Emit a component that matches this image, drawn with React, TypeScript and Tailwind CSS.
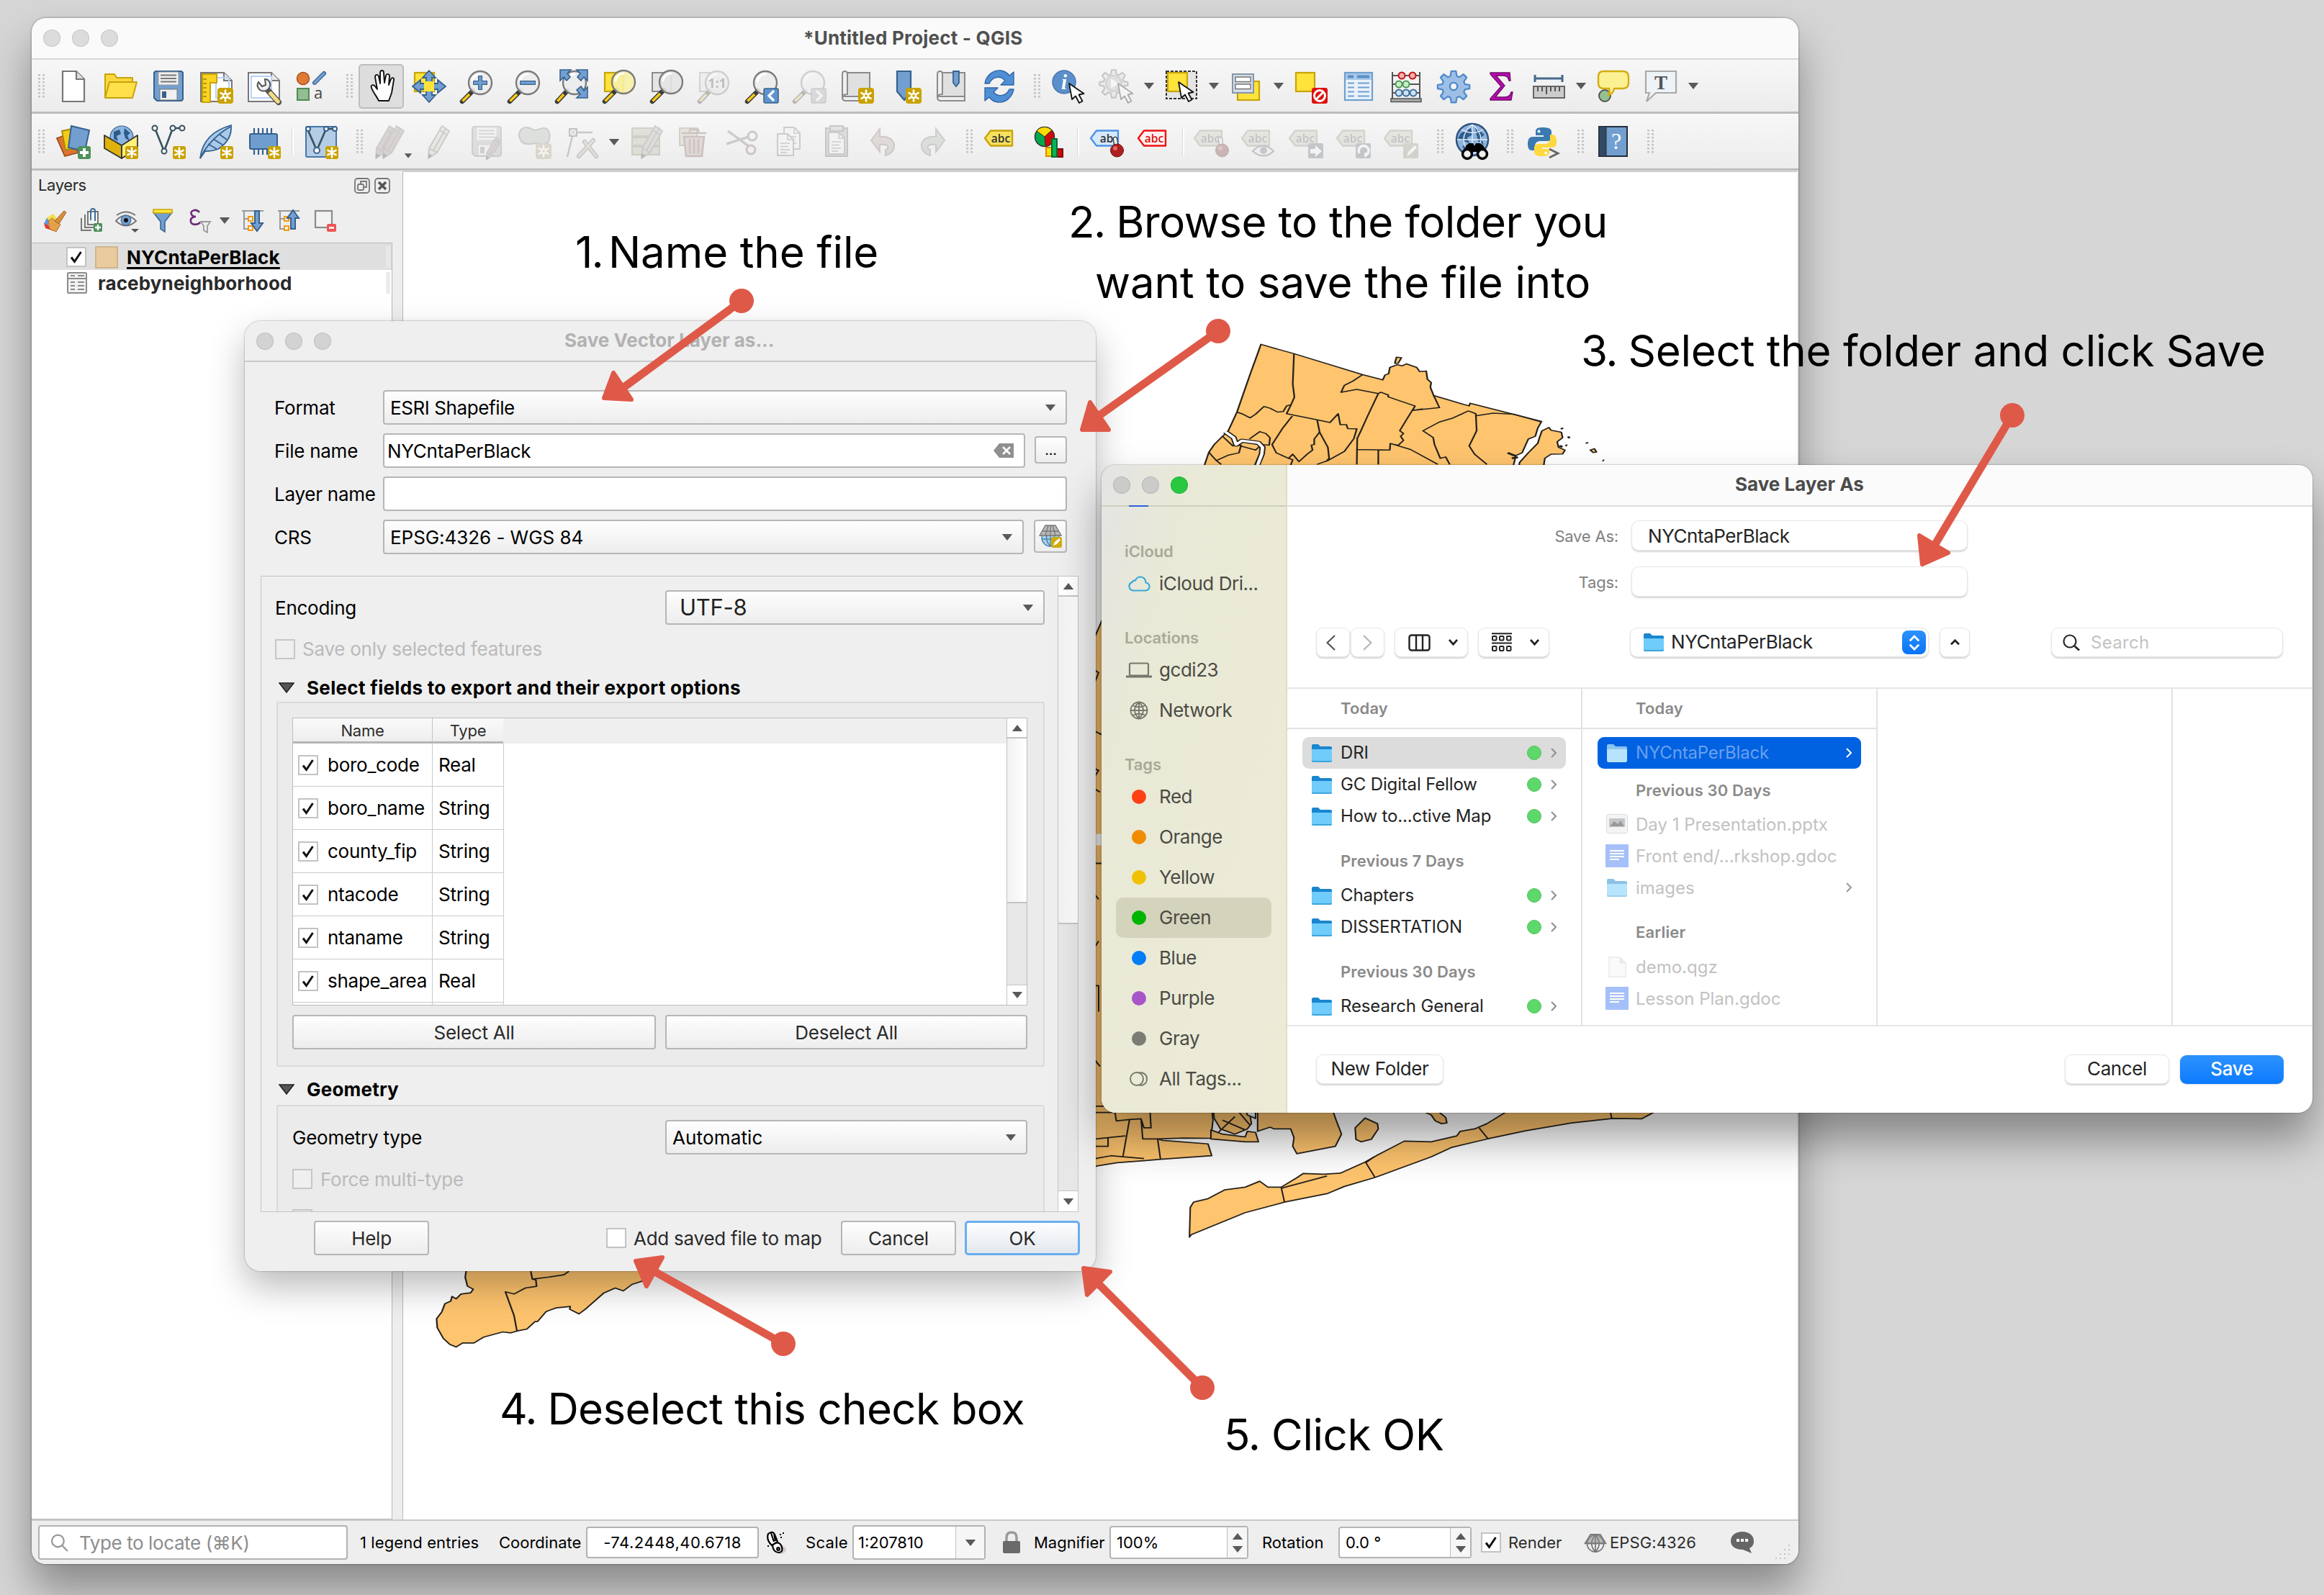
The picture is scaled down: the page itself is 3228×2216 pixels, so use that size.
import React from "react";

type Node = React.ReactNode;

const BLUE = "#729fcf";
const NAVY = "#35618e";
const YEL = "#fde33a";
const GOLD = "#c8a40a";

/* ---------- small drawing helpers, all on a 48 x 48 grid ---------- */

const Badge = () => (
  <g>
    <rect x="26" y="26" width="22" height="22" rx="4" fill="#c9a200" />
    <path d="M37 29.5v15M30.5 33.2l13 7.6M43.5 33.2l-13 7.6" stroke="#fff" strokeWidth="2.6" strokeLinecap="round" />
    <circle cx="37" cy="37" r="4" fill="#fff" />
    <circle cx="37" cy="37" r="1.8" fill="#c9a200" />
  </g>
);

const Star = () => (
  <g>
    <rect x="30" y="30" width="18" height="18" rx="3" fill="#c9a200" />
    <path d="M39 32.5v13M33.4 35.8l11.2 6.4M44.6 35.8l-11.2 6.4" stroke="#fff" strokeWidth="2.6" strokeLinecap="round" />
  </g>
);

const Lens = ({ cx = 29, cy = 19, fill = "#ececec" }: { cx?: number; cy?: number; fill?: string }) => (
  <g>
    <path d={`M${cx - 10} ${cy + 11}L4 45`} stroke="#3a3a3a" strokeWidth="6.5" strokeLinecap="round" />
    <path d={`M${cx - 15} ${cy + 16}L4.4 44.6`} stroke="#f6c916" strokeWidth="3.6" />
    <circle cx={cx} cy={cy} r="16" fill={fill} fillOpacity=".9" stroke="#7b7b7b" strokeWidth="2.4" />
    <path d={`M${cx - 11} ${cy - 2}a11 11 0 0 1 11-10`} stroke="#fff" strokeWidth="3" fill="none" strokeLinecap="round" />
  </g>
);

const Cursor = ({ x = 26, y = 20 }: { x?: number; y?: number }) => (
  <path
    transform={`translate(${x} ${y})`}
    d="M0 0L4 22l5-4.500 5 9.500 4.500-2.500-5-9 7-1.500z"
    fill="#fff"
    stroke="#111"
    strokeWidth="1.800"
    strokeLinejoin="round"
  />
);

/* eight-toothed cog outline centred on 24,24 */
const COG =
  "M20.500 1.500h7l1.200 7.200 3.800 1.600 6-4.300 4.800 4.800-4.200 6.100 1.500 3.700 7 1.200v5.400l-7 1.300-1.500 3.800 4.200 6-4.800 4.900-6-4.200-3.800 1.500-1.200 7.200h-7l-1.200-7.200-3.800-1.500-6 4.200-4.800-4.900 4.200-6-1.500-3.800-7-1.300v-5.400l7-1.200 1.500-3.700-4.200-6.100L9.500 6l6 4.300 3.800-1.600z";

const Disk = () => (
  <g>
    <path d="M6 3h36l2 2v37l-2 2H8l-4-4V5z" fill={BLUE} stroke={NAVY} strokeWidth="2" />
    <rect x="10" y="4" width="28" height="18" fill="#f0f0f0" stroke="#999" />
    <path d="M13 8.500h22M13 13h22M13 17.500h22" stroke="#777" strokeWidth="2" />
    <rect x="12" y="28" width="24" height="15" fill="#f0f0f0" stroke="#777" />
    <rect x="15" y="31" width="6" height="9" fill={NAVY} />
  </g>
);

const Pencil = ({ dx = 0, fill = "#d8cfae" }: { dx?: number; fill?: string }) => (
  <g transform={`translate(${dx} 0)`}>
    <path d="M24 2l10 7-17 30-12 8 1-14z" fill={fill} stroke="#777" strokeWidth="2" strokeLinejoin="round" />
    <path d="M29 6L12 36M6 33l11 6M21 8l10 7" stroke="#777" strokeWidth="1.800" />
    <path d="M5 47l.500-7 5 3z" fill="#333" />
  </g>
);

const TagShape = ({ fill, stroke, text, color, dx = 0 }: { fill: string; stroke: string; text: string; color: string; dx?: number }) => (
  <g transform={`translate(${dx} 0)`}>
    <path d="M3 19L11 8.500h30v21H11z" fill={fill} stroke={stroke} strokeWidth="2.400" strokeLinejoin="round" />
    <text x="25" y="24.500" textAnchor="middle" fontFamily="Open Sans" fontWeight="600" fontSize="15.500" fill={color}>
      {text}
    </text>
  </g>
);

const FadedTag = ({ children }: { children?: Node }) => (
  <g>
    <TagShape fill="#c9c7a6" stroke="#8d8b73" text="abc" color="#555" dx={-3} />
    {children}
  </g>
);

const Pin = () => (
  <g>
    <path d="M36 20l2 14" stroke="#333" strokeWidth="6.500" strokeLinecap="round" />
    <path d="M36 20l2 12" stroke="#f4f4f4" strokeWidth="4" strokeLinecap="round" />
    <circle cx="38.500" cy="36" r="9" fill="#ad1f1f" stroke="#6e1010" />
    <circle cx="36" cy="33" r="3" fill="#df6a6a" />
  </g>
);

const Scroll = () => (
  <g>
    <path d="M11 5h31v37H13" fill="#e0e0e0" stroke="#8b8b8b" strokeWidth="2" />
    <path d="M4 7q0-4 3.500-4T11 7v28q-7 0-7 4zM4 39q0 5 5 5h33v-6H9q-5-1-5 3" fill="#efefef" stroke="#8b8b8b" strokeWidth="2" />
  </g>
);

const Sheet = ({ x, y }: { x: number; y: number }) => (
  <g transform={`translate(${x} ${y})`}>
    <path d="M0 0h14l8 8v22H0z" fill="#f5f5f5" stroke="#777" strokeWidth="2" />
    <path d="M14 0v8h8M4 13h13M4 17.500h11M4 22h13M4 26h9" stroke="#777" strokeWidth="1.600" fill="none" />
  </g>
);

const icons: Record<string, Node> = {
  newDoc: (
    <g>
      <path d="M9 3h19l11 11v31H9z" fill="#fff" stroke="#777" strokeWidth="2.200" />
      <path d="M28 3v11h11" fill="#ddd" stroke="#777" strokeWidth="2.200" />
    </g>
  ),
  open: (
    <g stroke={GOLD} strokeWidth="2" strokeLinejoin="round">
      <path d="M2 40V7h13l3 5h22v9" fill="#fbd63c" />
      <path d="M2 40L8 18h38l-6 22z" fill="#ffe04a" />
    </g>
  ),
  save: <Disk />,
  newLayout: (
    <g>
      <path d="M3 5h32l11 11v29H3z" fill="#fff" stroke="#777" strokeWidth="2" />
      <path d="M35 5v11h11" fill="#e8e8e8" stroke="#777" strokeWidth="2" />
      <rect x="24" y="12" width="18" height="28" fill="none" stroke="#b9d2f5" strokeWidth="2" />
      <path d="M5 7h20v12h-9v27H5z" fill="#f9d423" stroke={GOLD} strokeWidth="2" />
      <path d="M6 14h5M6 20h5M6 26h5M6 32h5M6 38h5" stroke="#a48400" strokeWidth="1.600" />
      <Badge />
    </g>
  ),
  layoutMgr: (
    <g>
      <path d="M3 5h32l11 11v29H3z" fill="#fff" stroke="#777" strokeWidth="2" />
      <path d="M35 5v11h11" fill="#e8e8e8" stroke="#777" strokeWidth="2" />
      <rect x="7" y="10" width="28" height="30" fill="none" stroke="#b9d2f5" strokeWidth="2" />
      <path d="M28 27l7 8 10 11" stroke="#555" strokeWidth="8" strokeLinecap="round" />
      <path d="M34 34l10 11" stroke="#f3dc86" strokeWidth="5.500" strokeLinecap="round" />
      <path d="M17 18l5 6 5-2-1-8c6 0 9 6 6 12-4 6-10 5-13 3-4-4-4-8-2-11z" fill="#eee" stroke="#555" strokeWidth="2" />
    </g>
  ),
  style: (
    <g>
      <circle cx="13" cy="13" r="8.500" fill="#e07a35" stroke="#a8501a" strokeWidth="1.500" />
      <path d="M29 19L42 6" stroke={NAVY} strokeWidth="6" strokeLinecap="round" />
      <path d="M29 19L42 6" stroke={BLUE} strokeWidth="3.500" strokeLinecap="round" />
      <rect x="5" y="27" width="16" height="16" fill="#93bd93" stroke="#4f8a52" strokeWidth="2" />
      <text x="28" y="41" fontFamily="Open Sans" fontSize="22" fill="#444">a</text>
    </g>
  ),
  pan: (
    <path
      d="M20 44c-2-5-8-12-10-18-2-4 3-5 5-2l3 4-3-17c0-4 4-4 5-1l2 10V5c0-4 5-4 5 0l1 14 2-10c1-3 5-3 5 1l-1 12 3-8c1-3 5-2 4 1l-3 18-4 11z"
      fill="#fff"
      stroke="#111"
      strokeWidth="1.900"
      strokeLinejoin="round"
    />
  ),
  panSel: (
    <g>
      <rect x="4" y="5" width="27" height="26" fill={YEL} stroke={GOLD} strokeWidth="2.200" />
      <path
        d="M24 2l9 10h-5v8h8v-5l11 9-11 9v-5h-8v8h5l-9 10-9-10h5v-8h-8v5L1 24l11-9v5h8v-8h-5z"
        fill={BLUE}
        stroke={NAVY}
        strokeWidth="1.800"
      />
      <rect x="17" y="17" width="14" height="14" fill={YEL} />
    </g>
  ),
  zoomIn: (
    <g>
      <Lens />
      <path d="M29 9v20M19 19h20" stroke={NAVY} strokeWidth="6" />
      <path d="M29 10v18M20 19h18" stroke={BLUE} strokeWidth="3.500" />
    </g>
  ),
  zoomOut: (
    <g>
      <Lens />
      <path d="M18 19h22" stroke={NAVY} strokeWidth="6" />
      <path d="M19 19h20" stroke={BLUE} strokeWidth="3.500" />
    </g>
  ),
  zoomFull: (
    <g>
      <Lens cx={28} />
      <g fill={BLUE} stroke={NAVY} strokeWidth="1.600">
        <path d="M8 1h15l-5 5 4 5-5 5-4-5-5 5z" />
        <path d="M46 1H31l5 5-4 5 5 5 4-5 5 5z" />
        <path d="M46 40H31l5-5-5-6 6-5 4 6 5-5z" />
      </g>
    </g>
  ),
  zoomSel: (
    <g>
      <rect x="4" y="5" width="26" height="26" fill={YEL} stroke={GOLD} strokeWidth="2.200" />
      <Lens cx={30} cy={18} fill="#f7efa6" />
    </g>
  ),
  zoomLayer: (
    <g>
      <rect x="4" y="5" width="26" height="26" fill="#e4e4e4" stroke="#8b8b8b" strokeWidth="2" />
      <Lens cx={30} cy={18} fill="#e4e4e4" />
    </g>
  ),
  zoomNative: (
    <g>
      <rect x="4" y="5" width="26" height="26" fill="#e4e4e4" stroke="#8b8b8b" strokeWidth="2" />
      <Lens cx={28} cy={19} fill="#e4e4e4" />
      <text x="28" y="26" textAnchor="middle" fontFamily="Open Sans" fontWeight="700" fontSize="18" fill="#444">1:1</text>
    </g>
  ),
  zoomLast: (
    <g>
      <Lens />
      <rect x="27" y="27" width="20" height="20" rx="2" fill="#5f93cc" stroke={NAVY} strokeWidth="1.500" />
      <path d="M41 30l-7 7 7 7" stroke="#fff" strokeWidth="3.200" fill="none" />
    </g>
  ),
  zoomNext: (
    <g>
      <Lens />
      <rect x="27" y="27" width="20" height="20" rx="2" fill="#9aa7b5" stroke="#777" strokeWidth="1.500" />
      <path d="M34 30l7 7-7 7" stroke="#fff" strokeWidth="3.200" fill="none" />
    </g>
  ),
  newMap: (<g><Scroll /><Badge /></g>),
  newMark: (
    <g>
      <path d="M14 3h19v28l-9 12-10-12z" fill={BLUE} stroke={NAVY} strokeWidth="2.200" />
      <Badge />
    </g>
  ),
  marks: (
    <g>
      <Scroll />
      <path d="M26 3h8v16l-4 5-4-5z" fill={BLUE} stroke={NAVY} strokeWidth="1.800" />
    </g>
  ),
  refresh: (
    <g fill="#4f8fd6" stroke="#2f66a5" strokeWidth="1.400" strokeLinejoin="round">
      <path d="M4 20C6 8 16 1 26 2c5 .500 9 3 12 7l6-5v18H26l6-6c-7-8-18-5-22 4z" />
      <path d="M44 28C42 40 32 47 22 46c-5-.500-9-3-12-7l-6 5V26h18l-6 6c7 8 18 5 22-4z" />
    </g>
  ),
  identify: (
    <g>
      <circle cx="17" cy="18" r="16" fill="#5b8fcb" stroke="#4477b0" strokeWidth="1.500" />
      <text x="17" y="28" textAnchor="middle" fontFamily="Liberation Serif" fontWeight="700" fontStyle="italic" fontSize="29" fill="#fff">i</text>
      <Cursor x={24} y={20} />
    </g>
  ),
  action: (
    <g>
      <g transform="translate(0 0) scale(.83)"><path d={COG} fill="#ddd" stroke="#666" strokeWidth="2.600" strokeLinejoin="round" /></g>
      <circle cx="20" cy="20" r="11" fill="#aeb6c0" stroke="#888" strokeWidth="2" />
      <path d="M16 13l11 7-11 7z" fill="#fff" />
      <Cursor x={26} y={20} />
    </g>
  ),
  select: (
    <g>
      <rect x="3" y="3" width="42" height="38" fill="#e4e4e4" stroke="#333" strokeWidth="2" strokeDasharray="4 2" />
      <rect x="5" y="5" width="27" height="26" fill={YEL} stroke={GOLD} strokeWidth="2.200" />
      <Cursor x={20} y={18} />
    </g>
  ),
  selForm: (
    <g>
      <rect x="12" y="17" width="30" height="26" fill={YEL} stroke={GOLD} strokeWidth="2.200" />
      <rect x="5" y="7" width="29" height="26" fill="#d5dde6" stroke="#8496a8" strokeWidth="2" />
      <rect x="9" y="11" width="21" height="6.500" fill="#fff" stroke="#777" strokeWidth="1.500" />
      <rect x="9" y="21" width="21" height="6.500" fill="#fff" stroke="#777" strokeWidth="1.500" />
    </g>
  ),
  deselect: (
    <g>
      <rect x="3" y="5" width="26" height="26" fill={YEL} stroke={GOLD} strokeWidth="2.200" />
      <rect x="25" y="26" width="22" height="22" rx="3" fill="#dd1111" />
      <circle cx="36" cy="37" r="7.500" fill="none" stroke="#fff" strokeWidth="3" />
      <path d="M31 42l10-10" stroke="#fff" strokeWidth="3" />
    </g>
  ),
  table: (
    <g>
      <rect x="5" y="5" width="38" height="38" fill="#eaf1f9" stroke="#6f9fd0" strokeWidth="2.200" />
      <rect x="6" y="6" width="36" height="9" fill="#a9c8e8" />
      <path d="M9 10.500h8M22 10.500h17" stroke="#5b8fc7" strokeWidth="4" />
      <path d="M9 19.500h9M23 19.500h16M9 25.500h9M23 25.500h16M9 31.500h9M23 31.500h16M9 37.500h9M23 37.500h16" stroke="#6f9fd0" strokeWidth="2.200" />
    </g>
  ),
  abacus: (
    <g>
      <path d="M5 4v38M43 4v38M5 9h38M5 21h38M5 33h38" stroke="#555" strokeWidth="2" />
      <g strokeWidth="2">
        <circle cx="18" cy="9" r="4.500" fill="#f7b0b0" stroke="#c01515" />
        <circle cx="33" cy="9" r="4.500" fill="#f7b0b0" stroke="#c01515" />
        <circle cx="14" cy="21" r="4.500" fill="#c9efc9" stroke="#4f9a55" />
        <circle cx="24" cy="21" r="4.500" fill="#c9efc9" stroke="#4f9a55" />
        <circle cx="14" cy="33" r="4.500" fill="#cfe2f5" stroke="#3d6f9e" />
        <circle cx="24" cy="33" r="4.500" fill="#cfe2f5" stroke="#3d6f9e" />
        <circle cx="34" cy="33" r="4.500" fill="#cfe2f5" stroke="#3d6f9e" />
      </g>
      <rect x="3" y="41" width="42" height="4.500" fill="#aaa" stroke="#555" strokeWidth="1.500" />
    </g>
  ),
  gear: (
    <g transform="translate(1.500 1.500) scale(.94)">
      <path d={COG} fill="#9dbfe6" stroke="#4f8acb" strokeWidth="2.400" strokeLinejoin="round" />
      <circle cx="24" cy="24" r="5.500" fill="#f3f3f3" stroke="#4f8acb" strokeWidth="2.600" />
    </g>
  ),
  sigma: <path d="M9 5h27l1 11h-2c-1-5-3-7-8-7H17l12 14-13 16h13c6 0 8-3 9-7h2l-2 11H9v-2l15-17L9 7z" fill="#bb0ab0" stroke="#6d0a6a" strokeWidth="1.300" />,
  ruler: (
    <g>
      <path d="M5 13h38M5 8v10M43 8v10" stroke="#44688c" strokeWidth="3" />
      <rect x="3" y="24" width="43" height="16" fill="#ccc" stroke="#666" strokeWidth="2" />
      <path d="M9 25v6M15 25v6M21 25v10M27 25v6M33 25v6M39 25v6" stroke="#555" strokeWidth="2" />
    </g>
  ),
  tips: (
    <g>
      <circle cx="12" cy="37" r="8" fill="#93c193" stroke="#555" strokeWidth="2" />
      <path d="M10 3h27q8 0 8 8v8q0 8-8 8H25q-1 7-9 10 4-4 2-10h-8q-7 0-7-8v-8q0-8 7-8z" fill="#fcf192" stroke="#d1ad10" strokeWidth="2.400" />
    </g>
  ),
  annot: (
    <g>
      <path d="M3 3h42v30H17L4 45l4-12H3z" fill="#eef3f8" stroke="#a9a9a9" strokeWidth="2.200" />
      <text x="24" y="28" textAnchor="middle" fontFamily="Liberation Serif" fontWeight="700" fontSize="27" fill="#555">T</text>
    </g>
  ),
  dsm: (
    <g>
      <path d="M1 19l14-5 16 25-19 5z" fill="#dd7431" stroke="#9c4d18" strokeWidth="1.800" />
      <path d="M8 9l18-4 6 29-19 1z" fill="#f4cc15" stroke="#a8880a" strokeWidth="1.800" />
      <path d="M21 2l25 6-6 29-23-5z" fill={BLUE} stroke={NAVY} strokeWidth="2" />
      <rect x="30" y="30" width="18" height="18" rx="3" fill="#4f915a" />
      <path d="M39 33v12M33 39h12" stroke="#fff" strokeWidth="4" />
    </g>
  ),
  geopkg: (
    <g>
      <circle cx="25" cy="18" r="16" fill="#8db6e2" stroke="#35618e" strokeWidth="1.200" />
      <path d="M14 10l8-3 2 6-6 3 2 7-6-3zM29 5l8 7-4 3 3 8-6-4-2-7z" fill="#2e5a88" />
      <path d="M1 15l24 14v18L1 33z" fill="#dfb20c" stroke="#333" strokeWidth="1.800" strokeLinejoin="round" />
      <path d="M47 15L25 29v18l22-14z" fill="#fff07a" stroke="#333" strokeWidth="1.800" strokeLinejoin="round" />
      <Star />
    </g>
  ),
  shp: (
    <g>
      <path d="M5 5l13 32L30 5h14" fill="none" stroke="#35505e" strokeWidth="2.600" />
      <g fill="#fff" stroke="#35505e" strokeWidth="2">
        <circle cx="5" cy="5" r="3.500" />
        <circle cx="30" cy="5" r="3.500" />
        <circle cx="43" cy="5" r="3.500" />
        <circle cx="18" cy="37" r="3.500" />
      </g>
      <Star />
    </g>
  ),
  feather: (
    <g>
      <path d="M2 47C4 30 12 10 45 1c1 12-4 24-18 33-7 3-14 3-18 3z" fill="#a9c9ea" stroke="#35618e" strokeWidth="1.800" />
      <path d="M2 47C8 34 22 15 44 3M13 27l12 7M20 20l13 8M28 13l11 8" stroke="#35618e" strokeWidth="1.800" fill="none" />
      <Star />
    </g>
  ),
  memory: (
    <g>
      <path d="M11 5v37M17 5v37M23 5v37M29 5v37M35 5v37" stroke="#35618e" strokeWidth="2.200" />
      <rect x="5" y="13" width="38" height="21" rx="2" fill="#6f9dd0" stroke="#35618e" strokeWidth="2" />
      <Star />
    </g>
  ),
  virtual: (
    <g>
      <rect x="3" y="3" width="42" height="42" rx="2" fill="#b5cce6" stroke="#4577a8" strokeWidth="2" />
      <path d="M5 6l13 30L31 6h12" fill="none" stroke="#35505e" strokeWidth="2.600" />
      <g fill="#fff" stroke="#35618e" strokeWidth="2">
        <circle cx="6" cy="6" r="3" />
        <circle cx="31" cy="6" r="3" />
        <circle cx="43" cy="6" r="3" />
        <circle cx="18" cy="36" r="4" />
      </g>
      <Star />
    </g>
  ),
  edits: (
    <g>
      <Pencil dx={-3} fill="#b98a80" />
      <Pencil dx={7} fill="#b98a80" />
    </g>
  ),
  pencil: <Pencil dx={4} />,
  saveEdits: (<g><g opacity=".75" className="saturate-0"><Disk /></g><g transform="translate(20 16) scale(.7)"><Pencil fill="#b98a80" /></g></g>),
  addPoly: (
    <g>
      <path d="M4 10c4-9 14-6 18-3 6 3 10-3 16-2 8 1 9 12 6 18-4 7-12 3-18 3-8 1-15 3-20-3-3-4-4-9-2-13z" fill="#a9b8a0" stroke="#777" strokeWidth="2" />
      <g className="saturate-50"><Badge /></g>
    </g>
  ),
  vertex: (
    <g>
      <path d="M4 45L12 12M14 11h25" stroke="#666" strokeWidth="2.400" />
      <rect x="7" y="6" width="10" height="10" fill="#eee" stroke="#555" strokeWidth="2" />
      <path d="M7 6l10 10M17 6L7 16" stroke="#555" />
      <path d="M20 44l20-22M28 24l16 20" stroke="#555" strokeWidth="6" strokeLinecap="round" />
      <path d="M20 44l20-22M28 24l16 20" stroke="#c9b98a" strokeWidth="3.500" strokeLinecap="round" />
    </g>
  ),
  multiEdit: (
    <g>
      <g fill="#b9b884" stroke="#85844f" strokeWidth="2">
        <rect x="4" y="5" width="38" height="11" />
        <rect x="4" y="18" width="38" height="11" />
        <rect x="4" y="31" width="38" height="11" />
      </g>
      <Pencil dx={12} fill="#c9a79c" />
    </g>
  ),
  trash: (
    <g>
      <rect x="4" y="5" width="24" height="24" fill="#c9c78f" stroke="#85844f" strokeWidth="2" />
      <path d="M10 17h28l-3 27H13z" fill="#d89a9a" stroke="#9c4f4f" strokeWidth="2.500" />
      <path d="M7 12h34M18 12V7h12v5M18 20v20M24 20v20M30 20v20" stroke="#9c4f4f" strokeWidth="2.500" fill="none" />
    </g>
  ),
  cut: (
    <g>
      <path d="M5 9l29 21M3 27l31-10" stroke="#777" strokeWidth="3.500" />
      <circle cx="39" cy="16" r="6" fill="none" stroke="#9c6060" strokeWidth="3" />
      <circle cx="37" cy="35" r="6" fill="none" stroke="#9c6060" strokeWidth="3" />
    </g>
  ),
  copy: (<g><Sheet x={17} y={4} /><Sheet x={8} y={13} /></g>),
  paste: (
    <g>
      <rect x="9" y="5" width="30" height="39" fill="#aaa" stroke="#666" strokeWidth="2" />
      <Sheet x={13} y={11} />
      <rect x="15" y="2" width="18" height="7" fill="#bbb" stroke="#666" strokeWidth="2" />
    </g>
  ),
  undo: <path d="M18 6v11c14-2 21 7 20 14-1 6-6 11-12 12V35c5-1 6-9-8-7v10L6 22z" fill="#c7a093" stroke="#8d6a60" strokeWidth="2" />,
  redo: <path d="M30 6v11c-14-2-21 7-20 14 1 6 6 11 12 12V35c-5-1-6-9 8-7v10l12-16z" fill="#a4b5a6" stroke="#6d7d70" strokeWidth="2" />,
  label: <TagShape fill="#f7e15e" stroke="#c8a40a" text="abc" color="#333" dx={-2} />,
  diagram: (
    <g>
      <circle cx="18" cy="17" r="13.500" fill="#04a84c" stroke="#333" strokeWidth="1.500" />
      <path d="M18 17L7 9A13.500 13.500 0 0 1 28 8z" fill="#fcdb00" stroke="#333" />
      <path d="M18 17L28 8a13.500 13.500 0 0 1-9 22.500z" fill="#cf0a0a" stroke="#333" />
      <rect x="20" y="32" width="8" height="12" fill="#fbe000" stroke="#e08a00" strokeWidth="2" />
      <rect x="35" y="34" width="8" height="11" fill="#cf0a0a" stroke="#7c0000" strokeWidth="2" />
      <rect x="28" y="20" width="7" height="25" fill="#04b558" stroke="#036b33" strokeWidth="2" />
    </g>
  ),
  labelPin: (<g><TagShape fill="#d6e8fb" stroke="#4f92e8" text="ab" color="#333" dx={-1} /><Pin /></g>),
  labelRed: <TagShape fill="#fff0f0" stroke="#ee1111" text="abc" color="#dd1111" dx={-1} />,
  tagPin: <FadedTag><Pin /></FadedTag>,
  tagEye: (
    <FadedTag>
      <path d="M15 37q14-15 29 0-14 13-29 0z" fill="#eee" stroke="#555" strokeWidth="2" />
      <circle cx="30" cy="36" r="5" fill="#55708c" />
    </FadedTag>
  ),
  tagMove: (
    <FadedTag>
      <rect x="26" y="26" width="21" height="21" rx="2" fill="#5a6b7c" />
      <path d="M29 34h7v-5l9 8-9 8v-5h-7z" fill="#fff" />
    </FadedTag>
  ),
  tagRot: (
    <FadedTag>
      <rect x="26" y="26" width="21" height="21" rx="2" fill="#5a6b7c" />
      <path d="M31 40a7 7 0 1 1 9 3v-4" fill="none" stroke="#fff" strokeWidth="3.500" />
    </FadedTag>
  ),
  tagEdit: (
    <FadedTag>
      <rect x="26" y="26" width="21" height="21" rx="2" fill="#94936a" />
      <path d="M31 44l2-6 9-9 3 3-9 9z" fill="#fff" />
    </FadedTag>
  ),
  metasearch: (
    <g>
      <circle cx="24" cy="21" r="22" fill="#8fb3dc" stroke="#2c5480" strokeWidth="2.500" />
      <path d="M8 12l14-7 3 9-8 4 3 8-8-3-8-4zM28 4l13 10-5 4 4 10-8-5-2-8zM10 30l8-2 2 10-6 0z" fill="#2f5d8e" />
      <path d="M3 21h42M24 0v42M9 7q15 9 30 0M24 0c-16 12-16 30 0 42M24 0c16 12 16 30 0 42" stroke="#e4eef8" strokeWidth="1.400" fill="none" />
      <path d="M19 26h6l2 4 2-4h6l4 3 7 12-8 3-8-6h-5l-8 6-8-3 7-12z" fill="#000" />
      <circle cx="17" cy="41" r="6.500" fill="#eee" stroke="#000" strokeWidth="3.500" />
      <circle cx="38" cy="41" r="6.500" fill="#eee" stroke="#000" strokeWidth="3.500" />
    </g>
  ),
  python: (
    <g>
      <path d="M24 4c-8 0-9 3-9 6v5h11v2H11c-5 0-7 4-7 10s2 9 6 9h4v-6c0-4 3-7 7-7h10c4 0 6-2 6-6v-7c0-4-4-6-13-6z" fill="#3a7ab0" />
      <circle cx="19.500" cy="9.500" r="2" fill="#fff" />
      <path d="M25 44c8 0 9-3 9-6v-4H24v-2h14c5 0 6-4 6-9s-2-9-6-9h-3v6c0 4-3 7-7 7H18c-4 0-5 3-5 6v5c0 4 4 6 12 6z" fill="#ffd83e" />
      <circle cx="29" cy="39.500" r="2" fill="#fff" />
      <path d="M34 34l12 6-12 6" fill="none" stroke="#666" strokeWidth="2.800" />
    </g>
  ),
  help: (
    <g>
      <rect x="5" y="3" width="39" height="41" fill="#729fcf" stroke="#222e3c" strokeWidth="2" />
      <rect x="5" y="3" width="10" height="41" fill="#324a63" stroke="#222e3c" />
      <text x="29" y="34" textAnchor="middle" fontFamily="Liberation Serif" fontSize="32" fill="#fff">?</text>
    </g>
  ),
};

const Icon = ({ name, off }: { name: string; off?: boolean }) => (
  <svg viewBox="0 0 48 48" fill="none" className={off ? "h-12 w-12 shrink-0 overflow-visible opacity-30 saturate-50" : "h-12 w-12 shrink-0 overflow-visible"}>
    {icons[name]}
  </svg>
);

const Down = ({ className = "" }: { className?: string }) => (
  <svg viewBox="0 0 16 10" className={"h-[9px] w-[16px] shrink-0 " + className}>
    <path d="M0 0h16L8 10z" fill="#5a5a5a" />
  </svg>
);
const Up = () => (
  <svg viewBox="0 0 16 10" className="h-[9px] w-[16px] shrink-0">
    <path d="M0 10h16L8 0z" fill="#5a5a5a" />
  </svg>
);

const Grip = () => (
  <svg viewBox="0 0 10 34" className="h-[34px] w-[10px] shrink-0">
    {[0, 5, 10, 15, 20, 25, 30].map((y) => (
      <g key={y} fill="#c4c4c4">
        <rect x="0" y={y} width="3" height="2.500" />
        <rect x="6" y={y} width="3" height="2.500" />
      </g>
    ))}
  </svg>
);

/* "~" marks a disabled button, "*" a pressed one, "v" a drop-down arrow, "|" a separator, ":" a grip */
const row1 = "newDoc open save newLayout layoutMgr style : *pan panSel zoomIn zoomOut zoomFull zoomSel zoomLayer ~zoomNative zoomLast ~zoomNext newMap newMark marks refresh : identify ~action v select v selForm v deselect table abacus gear sigma ruler v tips annot v";
const row2 = "dsm geopkg shp feather memory | virtual : ~edits ~pencil ~saveEdits ~addPoly ~vertex v ~multiEdit ~trash ~cut ~copy ~paste ~undo ~redo : label diagram | labelPin labelRed | ~tagPin ~tagEye ~tagMove ~tagRot ~tagEdit : metasearch : python : help :";

const Toolbar = ({ items, className }: { items: string; className: string }) => (
  <div className={"flex shrink-0 items-center border-b-[3px] border-[#bcbcbc] bg-gradient-to-b from-[#f7f7f7] to-[#ececec] " + className}>
    <div className="flex w-[25px] shrink-0 justify-end pr-[6px]"><Grip /></div>
    {items.split(" ").map((it, i) => {
      if (it === ":") return <div key={i} className="flex w-[31.500px] shrink-0 justify-end pr-[6px]"><Grip /></div>;
      if (it === "|") return <div key={i} className="flex w-[14px] shrink-0 justify-center"><div className="h-[38px] w-[3px] border-l border-[#d8d8d8] bg-white" /></div>;
      if (it === "v") return <div key={i} className="flex w-[24px] shrink-0 justify-center"><Down /></div>;
      if (it[0] === "*")
        return (
          <div key={i} className="flex w-[66px] shrink-0 justify-center">
            <div className="flex h-[62px] w-[63px] items-center justify-center rounded-[5px] border-2 border-[#bdbdbd] bg-[#dedede]"><Icon name={it.slice(1)} /></div>
          </div>
        );
      return (
        <div key={i} className="relative flex w-[66px] shrink-0 justify-center">
          <Icon name={it.replace("~", "")} off={it[0] === "~"} />
          {it === "~edits" && <Down className="absolute bottom-0 right-[2px] scale-75" />}
        </div>
      );
    })}
  </div>
);

const Lights = ({ third = "bg-[#dcdcdc]", tone = "bg-[#dcdcdc]" }: { third?: string; tone?: string }) => (
  <div className="flex shrink-0 gap-[16px]">
    <div className={"h-[24px] w-[24px] rounded-full border border-black/10 " + tone} />
    <div className={"h-[24px] w-[24px] rounded-full border border-black/10 " + tone} />
    <div className={"h-[24px] w-[24px] rounded-full border border-black/10 " + third} />
  </div>
);

const Check = ({ on, dim }: { on?: boolean; dim?: boolean }) => (
  <div className={"flex h-[28px] w-[28px] shrink-0 items-center justify-center border-2 " + (dim ? "border-[#c6c6c6] bg-[#efefef]" : "border-[#c3c3c3] bg-white")}>
    {on && (
      <svg viewBox="0 0 20 20" className="h-[20px] w-[20px]">
        <path d="M3 10.500l4.500 6L16.500 3" fill="none" stroke="#111" strokeWidth="3" />
      </svg>
    )}
  </div>
);

/* ---------- layers panel ---------- */

const layerIcons: Node[] = [
  <g key="0">
    <path d="M3 14l11-7 6 8-9 9z" fill="#f6dc4a" />
    <path d="M5 13l5 5-4 6-5-3z" fill="#5b97e0" />
    <path d="M1 20l6 3 8 8-12-4z" fill="#e23b2e" />
    <path d="M7 18l5-5 12 9-6 10-9-4z" fill="#e5a04c" stroke="#b0702a" />
    <path d="M16 17L29 3l3 2-10 16z" fill="#d98f3c" stroke="#9c6020" />
  </g>,
  <g key="1" stroke="#777" strokeWidth="2" fill="none">
    <rect x="12" y="4" width="14" height="18" fill="#f4f4f4" />
    <path d="M8 8v18h14M3 13v17h14" />
    <path d="M16 16V3q0-3 3-3t3 3v14" stroke="#3d6f9e" />
    <rect x="20" y="20" width="12" height="12" rx="2" fill="#4f915a" stroke="none" />
    <path d="M26 22v8M22 26h8" stroke="#fff" strokeWidth="2.400" />
  </g>,
  <g key="2">
    <path d="M1 17q13-15 28 0-14 13-28 0z" fill="#f4f4f4" stroke="#777" strokeWidth="2" />
    <path d="M2 9q13-9 26 0" fill="none" stroke="#777" strokeWidth="2" />
    <circle cx="15" cy="16" r="7" fill="#729fcf" stroke="#35618e" />
    <circle cx="15" cy="16" r="3" fill="#111" />
    <path d="M22 28h11l-5.500 5z" fill="#555" />
  </g>,
  <g key="3" strokeWidth="1.500">
    <path d="M3 5h26L19 18v14l-6-4V18z" fill="#729fcf" stroke="#35618e" />
    <rect x="3" y="1" width="26" height="5" fill="#fde33a" stroke="#c8a40a" />
  </g>,
  <g key="4" transform="translate(2 0)">
    <path d="M15 5C10-1 1 3 4 8c1 2 4 3 6 3-5 0-8 3-7 7 1 5 9 5 13 1" fill="none" stroke="#6e2a78" strokeWidth="2.600" />
    <path d="M17 18h13l-4 6v9l-5-3v-6z" fill="#eee" stroke="#999" strokeWidth="1.800" />
  </g>,
  <g key="5" strokeWidth="2" fill="none">
    <path d="M1 3h30M4 3v25h6M4 14h6" stroke="#999" />
    <rect x="10" y="11" width="6" height="6" stroke="#f59b0a" />
    <rect x="10" y="24" width="6" height="6" stroke="#f59b0a" />
    <path d="M19 3h6v17h5l-8 11-8-11h5z" fill="#729fcf" stroke="#35618e" />
  </g>,
  <g key="6" strokeWidth="2" fill="none">
    <path d="M1 3h30M4 3v25h6M4 14h6" stroke="#999" />
    <rect x="10" y="11" width="6" height="6" stroke="#f59b0a" />
    <rect x="10" y="24" width="6" height="6" stroke="#f59b0a" />
    <path d="M19 28h6V13h5L22 2l-8 11h5z" fill="#729fcf" stroke="#35618e" />
  </g>,
  <g key="7">
    <rect x="3" y="3" width="23" height="23" fill="#f2f2f2" stroke="#8b8b8b" strokeWidth="2.200" />
    <rect x="19" y="21" width="13" height="11" rx="2" fill="#ee5555" />
    <path d="M22 26.500h7" stroke="#fff" strokeWidth="2.600" />
  </g>,
];

const LayersPanel = () => (
  <div className="flex w-[501px] shrink-0 flex-col bg-[#eeeeee]">
    <div className="flex h-[40px] items-center justify-between pl-[9px] pr-[3px]">
      <span className="-mt-[2px] text-[22px] tracking-[-0.400px] text-[#2b2b2b]">Layers</span>
      <div className="flex gap-[6px]">
        <svg viewBox="0 0 22 22" className="h-[22px] w-[22px]" fill="none" stroke="#777" strokeWidth="1.800">
          <rect x="1" y="1" width="20" height="20" rx="4" /><rect x="5" y="9" width="8" height="8" rx="1.500" /><path d="M9 9V5h8v8h-4" />
        </svg>
        <svg viewBox="0 0 22 22" className="h-[22px] w-[22px]" fill="none" stroke="#777" strokeWidth="1.800">
          <rect x="1" y="1" width="20" height="20" rx="4" /><path d="M6 6l10 10M16 6L6 16" stroke="#555" strokeWidth="3.500" />
        </svg>
      </div>
    </div>
    <div className="flex h-[59px] items-center pb-[3px] pl-[16px]">
      {layerIcons.map((ic, i) => (
        <React.Fragment key={i}>
          <svg viewBox="0 0 32 33" className={(i === 4 ? "mr-[12px]" : "mr-[18px]") + " h-[33px] w-[32px] shrink-0 overflow-visible"}>{ic}</svg>
          {i === 4 && <div className="mr-[15px] flex w-[16px] justify-center"><Down /></div>}
        </React.Fragment>
      ))}
    </div>
    <div className="flex flex-1 flex-col border border-l-0 border-[#b9b9b9] bg-white">
      <div className="flex h-[37px] items-center bg-[#dfdfdf] pl-[48px] pr-[2px] pt-px">
        <Check on />
        <div className="ml-[12px] h-[31px] w-[32px] border-2 border-[#d0b58c] bg-[#eacb9d]" />
        <span className="ml-[12px] text-[26px] font-bold tracking-[0.150px] text-black underline decoration-[2.500px] underline-offset-[4px]">NYCntaPerBlack</span>
        <div className="ml-auto h-[30px] w-[6px] bg-[#e8e8e8]" />
      </div>
      <div className="flex h-[36px] items-center pl-[49px] pr-[2px]">
        <svg viewBox="0 0 28 30" className="h-[30px] w-[28px]" fill="#f2f2f2" stroke="#8b8b8b" strokeWidth="2">
          <rect x="1" y="1" width="26" height="28" rx="1.500" />
          <path d="M1 9h26M5 5h6M15 5h9M5 14h6M15 14h9M5 19h6M15 19h9M5 24h6M15 24h9" />
        </svg>
        <span className="ml-[15px] text-[26px] font-bold tracking-[0.150px] text-[#2a2a2a]">racebyneighborhood</span>
        <div className="ml-auto h-[30px] w-[6px] bg-[#ececec]" />
      </div>
    </div>
  </div>
);

/* ---------- map canvas: drawn in window-wide coordinates ---------- */

const MapCanvas = () => (
  <svg viewBox="560 240 1936 1871" className="h-full w-full" fill="none" strokeLinejoin="round">
    <g transform="translate(1500 400) scale(.574 .3827)" stroke="#26221c" strokeWidth="4">
      <path fill="#fec46e" d="M290 670L302 642L312 598L325 570L345 540L358 523L380 452L413 310L432 232L438 206L470 220L518 240L684 316L733 335L738 318L747 313L750 290L768 280L780 284L790 277L815 290L822 305L838 303L841 333L850 345L848 362L856 392L942 430L944 420L1117 486L1108 510L1102 540L1085 550L1070 600L1055 610L1045 670Z" />
      <path fill="#fec46e" d="M1060 670L1064 635L1085 600L1108 565L1112 545L1118 520L1135 508L1140 518L1165 525L1168 545L1155 560L1158 580L1174 590L1168 604L1140 605L1125 620L1120 670Z" />
      <path fill="#fec46e" d="M762 275l4-22 12 2-8 20zM1235 590l10-5 5 12-8 2z" />
      <path d="M518 240L515 350L519 398L511 425L500 430L492 450L478 452L460 438L445 432L425 460L412 473L395 460L380 452M511 425L500 458L574 480L605 490L625 458L630 498L645 498L648 512L670 513L663 548L640 595L600 628L574 642M684 316L660 340L640 355L632 380L670 370L722 385L728 380L746 390L746 397L811 430L805 446L870 436L856 392M722 385L695 470L680 520L671 548L670 642M811 430L790 480L774 520L783 530L776 540L783 555L770 573L751 566L750 590L670 588M722 590V642M751 566L800 588L866 642M805 446L830 440M940 448L958 458L960 520L942 575L955 605L985 642M940 448L900 475L870 488L830 520L855 545L858 570L872 620L885 615L895 642M960 465L1000 456L1050 460L1117 488M516 462L490 512L465 570L475 600L505 620L515 605L530 632L550 605L563 590L560 572L567 570L567 550L580 525L574 480M580 525L600 580L603 620L595 632M345 540L370 575L390 572L385 600L360 608L330 628L312 598M330 628L342 642M388 575L425 590L440 570L458 572L460 545L450 530L435 523L410 550M505 620L515 625L510 645" />
      <path d="M352 524L372 545L378 570L392 556L432 564L442 580L440 605L428 648" strokeWidth="15" />
      <path d="M352 524L372 545L378 570L392 556L432 564L442 580L440 605L428 652" stroke="#fff" strokeWidth="8" />
      <path d="M1035 600l20 12M1045 620l15-4M1165 510l3 4M1180 545l6-2M1175 572l4 2M1226 562l2 4M1265 627l3 2M1160 575l8 3" strokeWidth="7" />
    </g>
    <path d="M1510 1560V910L1536 850V1560Z" fill="#fec46e" stroke="#26221c" strokeWidth="2" />
    <path d="M1518 1159h14v16h-14z" fill="#fff" />
    <path d="M1518 930l8 5-8 20M1518 1015l12 6M1518 1067l8 4-8 12M1518 1095l10 6M1518 1200h12M1518 1240l8 10M1518 1320l8-12M1518 1370h8v36M1518 1470l10 12M1518 1538h14" stroke="#26221c" strokeWidth="2" />
    <g transform="translate(1500 980) scale(.574 .4847)" stroke="#26221c" strokeWidth="3.600" fill="#fec46e">
      <path d="M0 1150H318L322 1190L317 1242L250 1241L188 1244L200 1248L310 1258L319 1292L195 1302L155 1306L90 1312L38 1322L0 1322Z" />
      <path d="M317 1218L345 1230L400 1238L405 1222L425 1225L432 1252L400 1252L317 1244Z" />
      <path d="M322 1150H408L415 1200L405 1215L375 1230L340 1215L325 1185Z" />
      <path d="M345 1190L400 1218M335 1225L375 1180M380 1160L412 1205" fill="none" />
      <path d="M400 1150L405 1175L425 1185V1150Z" fill="#fff" />
      <path d="M430 1150H608L620 1190L633 1230L618 1265L525 1286L515 1265L518 1240L510 1215L470 1215L460 1210L430 1222Z" />
      <path d="M690 1184L720 1200L722 1215L705 1245L680 1252L668 1245L666 1212Z" />
      <path d="M822 1160L850 1175L860 1192L875 1200L888 1198L885 1182L862 1160Z" />
      <path d="M265 1525L267 1440L275 1425L310 1415L350 1390L400 1382L435 1365L455 1382L487 1382L525 1355L540 1343L590 1345L630 1342L690 1310L720 1290L785 1250L850 1252L912 1235L920 1222L955 1215L985 1200L1040 1160H1400L1360 1186L1290 1185L1190 1198L1080 1220L985 1244L900 1268L850 1295L715 1354L640 1380L600 1400L495 1425L400 1455L270 1518Z" />
      <path d="M38 1168H85L88 1192L120 1188L148 1186L155 1212H172L170 1168M120 1188L104 1295L75 1292L38 1300M38 1244L110 1235M68 1242V1265H38M148 1186L152 1244H188L195 1302M104 1295L155 1300M487 1382L495 1425M712 1295L692 1312L714 1354M966 1212L988 1244M1284 1168L1287 1186M487 1385L598 1350" fill="none" />
    </g>
    <g transform="translate(560 1700) scale(.4464 .3333)" stroke="#26221c" strokeWidth="5" fill="#fec46e">
      <path d="M198 180L193 225L200 262L218 275L210 290L180 295L165 315L152 305L148 325L130 335L120 370L104 398L106 435L125 480L145 505L165 516L185 499L220 499L250 475L310 453L335 457L355 449L385 441L410 410L418 410L445 368L475 353L520 347L518 358L547 378L570 355L625 290L660 270L685 282L712 255L740 243L830 180Z" />
      <path d="M397 200L402 233L413 236L415 263L380 270L345 295L318 286L345 385L354 449M402 233L450 225L500 215L516 200" fill="none" />
    </g>
  </svg>
);

/* ---------- status bar ---------- */

const Spin = ({ text, className }: { text: string; className: string }) => (
  <div className={"flex shrink-0 rounded-[4px] border-2 border-[#b4b4b4] bg-white " + className}>
    <div className="flex flex-1 items-center pl-[8px] text-[22px]">{text}</div>
    <div className="flex w-[28px] flex-col items-center justify-center gap-[9px] border-l border-[#bbb] bg-[#f6f6f6]"><Up /><Down /></div>
  </div>
);

const StatusBar = () => (
  <div className="flex h-[62px] shrink-0 items-center border-t-2 border-[#c9c9c9] bg-[#eeeeee] pl-[9px] text-[22px] text-black">
    <div className="flex h-[48px] w-[430px] shrink-0 items-center rounded-[4px] border-2 border-[#b2b2b2] bg-white pl-[15px] text-[26px] tracking-[-0.400px] text-[#8d8d8d]">
      <svg viewBox="0 0 24 24" className="mr-[15px] h-[25px] w-[25px]" fill="none" stroke="#999" strokeWidth="2.200"><circle cx="10" cy="9.500" r="8" /><path d="M15.500 15.500L23 23" /></svg>
      Type to locate (⌘K)
    </div>
    <span className="ml-[17px] w-[193px] shrink-0 pt-px tracking-[0.100px]">1 legend entries</span>
    <span className="w-[121px] shrink-0 pt-px">Coordinate</span>
    <div className="flex h-[44px] w-[240px] shrink-0 items-center justify-center rounded-[4px] border-2 border-[#b2b2b2] bg-white tracking-[0.500px]">-74.2448,40.6718</div>
    <svg viewBox="0 0 28 32" className="ml-[10px] h-[32px] w-[28px] shrink-0" fill="#fff" stroke="#000" strokeWidth="2.200">
      <ellipse cx="20" cy="26" rx="8" ry="6" fill="#d9c9c9" stroke="none" />
      <path d="M3 4q6-5 9 1l4 10-8 5q-8-8-5-16zM7 3l4 12M11 3l2 11" />
      <path d="M9 20q8-7 12 0 4 9-3 10-8 0-9-10z" /><circle cx="17" cy="25" r="1.800" />
      <path d="M19 5h2M23 3h2M20 9h2M2 21h2" />
    </svg>
    <span className="ml-[27px] w-[65px] shrink-0 pt-px tracking-[0.300px]">Scale</span>
    <div className="flex h-[48px] w-[185px] shrink-0 rounded-[4px] border-2 border-[#b2b2b2] bg-white">
      <div className="flex flex-1 items-center pl-[6px]">1:207810</div>
      <div className="flex w-[40px] items-center justify-center border-l border-[#c4c4c4] bg-[#f6f6f6]"><Down /></div>
    </div>
    <svg viewBox="0 0 24 32" className="ml-[24px] h-[32px] w-[24px] shrink-0">
      <path d="M5 15V9q0-7 7-7t7 7v6" fill="none" stroke="#9a9a9a" strokeWidth="3.500" /><rect y="14" width="24" height="17" rx="2" fill="#6a6a6a" />
    </svg>
    <span className="ml-[19px] w-[105px] shrink-0 pt-px">Magnifier</span>
    <Spin text="100%" className="h-[46px] w-[193px]" />
    <span className="ml-[19px] w-[106px] shrink-0 pt-px">Rotation</span>
    <Spin text="0.0 °" className="h-[44px] w-[185px]" />
    <div className="ml-[13px]"><Check on /></div>
    <span className="ml-[10px] w-[105px] shrink-0 pt-px text-[#2c2c2c]">Render</span>
    <svg viewBox="0 0 32 30" className="mr-[4px] h-[29px] w-[32px] shrink-0" fill="none" stroke="#777" strokeWidth="1.800">
      <circle cx="16" cy="16" r="12" /><path d="M16 3v26M4 16h24M16 4q-11 12 0 24M16 4q11 12 0 24" /><path d="M9 3h14l8 13H1z" fill="#8a8a8a" fillOpacity=".55" />
    </svg>
    <span className="w-[168px] shrink-0 pt-px tracking-[0.100px] text-[#2c2c2c]">EPSG:4326</span>
    <svg viewBox="0 0 32 30" className="h-[30px] w-[32px] shrink-0">
      <path d="M16 0c9 0 16 5 16 13 0 5-2 8-6 10l3 7-12-5C7 25 0 21 0 13S7 0 16 0z" fill="#666" />
      <path d="M8 12h4M14 12h4M20 12h4" stroke="#fff" strokeWidth="4" />
    </svg>
    <svg viewBox="0 0 24 24" className="ml-[30px] mt-[28px] h-[24px] w-[24px] shrink-0" fill="#c4c4c4">
      <path d="M18 1h2v2h-2zM18 7h2v2h-2zM12 7h2v2h-2zM18 13h2v2h-2zM12 13h2v2h-2zM6 13h2v2H6zM12 19h2v2h-2zM6 19h2v2H6zM0 19h2v2H0z" />
    </svg>
  </div>
);

/* ---------- "Save Vector Layer as" dialog ---------- */

const qt = "rounded-[4px] border-2 border-[#b6b6b6] bg-gradient-to-b from-[#fefefe] to-[#ededed]";

const Combo = ({ text, className, tcls = "text-[26px] tracking-[-0.400px]" }: { text: string; className: string; tcls?: string }) => (
  <div className={"flex h-[48px] items-center justify-between pr-[13px] " + qt + " " + className}>
    <span className={tcls}>{text}</span><Down />
  </div>
);

const Tri = () => (
  <svg viewBox="0 0 22 15" className="mr-[17px] h-[15px] w-[22px]"><path d="M1 1h20L11 14z" fill="#555" stroke="#222" strokeWidth="1.500" /></svg>
);

const FieldRow = ({ label, children }: { label: string; children: Node }) => (
  <div className="flex h-[60px] items-start">
    <div className="flex h-[48px] w-[151px] items-center">{label}</div>
    {children}
  </div>
);

const fields = [["boro_code", "Real"], ["boro_name", "String"], ["county_fip", "String"], ["ntacode", "String"], ["ntaname", "String"], ["shape_area", "Real"]];

const VectorDialog = () => (
  <div className="absolute left-[340px] top-[446px] flex h-[1320px] w-[1182px] flex-col overflow-hidden rounded-[22px] bg-[#efefef] text-[26px] tracking-[-0.250px] text-black">
    <div className="flex h-[57px] shrink-0 items-center border-b-2 border-[#c9c9c9] pl-[16px]">
      <Lights tone="bg-[#d3d3d3]" third="bg-[#d3d3d3]" />
      <span className="-mt-[2px] ml-[324px] font-bold tracking-normal text-[#b2b2b2]">Save Vector Layer as...</span>
    </div>
    <div className="mt-[39px] flex shrink-0 flex-col pl-[41px] pr-[40px]">
      <FieldRow label="Format"><Combo text="ESRI Shapefile" className="flex-1 pl-[8px]" /></FieldRow>
      <FieldRow label="File name">
        <div className="mr-[13px] flex h-[48px] flex-1 items-center justify-between rounded-[4px] border-2 border-[#b6b6b6] bg-white pl-[4px] pr-[14px]">
          NYCntaPerBlack
          <svg viewBox="0 0 28 20" className="h-[20px] w-[28px]"><path d="M8 0h20v20H8L0 10z" fill="#8f8f8f" /><path d="M13 5l10 10M23 5L13 15" stroke="#fff" strokeWidth="2.500" /></svg>
        </div>
        <div className={"mt-[4px] flex h-[38px] w-[45px] items-center justify-center text-[20px] " + qt}>...</div>
      </FieldRow>
      <FieldRow label="Layer name"><div className="h-[48px] flex-1 rounded-[4px] border-2 border-[#b6b6b6] bg-white" /></FieldRow>
      <FieldRow label="CRS">
        <Combo text="EPSG:4326 - WGS 84" className="mr-[14px] flex-1 pl-[8px]" tcls="text-[26px] tracking-[-0.050px]" />
        <div className={"flex h-[46px] w-[46px] items-center justify-center " + qt}>
          <svg viewBox="0 0 32 32" className="h-[32px] w-[32px]" fill="none">
            <circle cx="16" cy="18" r="12" fill="#a9d0ec" stroke="#4c86b0" strokeWidth="1.500" />
            <path d="M16 6v24M4 20h24M16 6q-11 12 0 24M16 6q11 12 0 24" stroke="#4c86b0" strokeWidth="1.500" />
            <path d="M9 1h14l8 14H1z" fill="#b9b9b9" stroke="#777" strokeWidth="1.300" /><path d="M5 9h22M13 1L9 15M19 1l4 14M16 1v14" stroke="#777" strokeWidth="1.300" />
            <rect x="17" y="17" width="15" height="15" rx="3" fill="#d1ab0c" /><path d="M20 29l2-5 6-5 2 2-5 6z" fill="#fff" />
          </svg>
        </div>
      </FieldRow>
    </div>
    <div className="ml-[22px] mr-[24px] mt-[18px] flex h-[884px] shrink-0 border border-[#c4c4c4]">
      <div className="flex flex-1 flex-col overflow-hidden pl-[19px] pr-[18px]">
        <div className="mt-[19px] flex h-[48px] shrink-0 items-center justify-between">
          <span>Encoding</span><Combo text="UTF-8" className="w-[527px] pl-[18px]" tcls="text-[31px] tracking-[-0.300px] text-[#222]" />
        </div>
        <div className="flex h-[67px] shrink-0 items-center gap-[10px] text-[#bababa]"><Check dim />Save only selected features</div>
        <div className="flex h-[40px] shrink-0 items-center pl-[5px] font-bold tracking-[0.320px]"><Tri />Select fields to export and their export options</div>
        <div className="ml-[2px] flex h-[507px] shrink-0 flex-col rounded-[3px] border-2 border-[#dadada] bg-[#ebebeb] pl-[20px] pr-[22px] pt-[20px]">
          <div className="flex h-[400px] border border-[#bdbdbd] bg-white">
            <div className="flex flex-1 flex-col overflow-hidden">
              <div className="flex h-[35px] shrink-0 bg-[#efefef] text-[22px] text-[#2e2e2e]">
                <div className="flex w-[194px] items-center justify-center border-b-[3px] border-r border-b-[#b5b5b5] border-r-[#c4c4c4] bg-gradient-to-b from-[#fafafa] to-[#eeeeee] pt-[3px]">Name</div>
                <div className="flex w-[98px] items-center justify-center border-b-[3px] border-b-[#b5b5b5] bg-gradient-to-b from-[#fafafa] to-[#eeeeee] pt-[3px]">Type</div>
              </div>
              {fields.map(([n, t]) => (
                <div key={n} className="flex h-[60px] w-[293px] shrink-0 border-b border-r border-[#cbcbcb]">
                  <div className="flex w-[194px] items-center gap-[13px] whitespace-nowrap border-r border-[#cbcbcb] pl-[7px]"><Check on />{n}</div>
                  <div className="flex items-center pl-[8px]">{t}</div>
                </div>
              ))}
              <div className="flex h-[10px] w-[293px] shrink-0 border-r border-[#cbcbcb]"><div className="w-[194px] border-r border-[#cbcbcb]" /></div>
            </div>
            <div className="flex w-[28px] shrink-0 flex-col border-l border-[#c4c4c4] bg-[#e7e7e7]">
              <div className="flex h-[28px] items-center justify-center border-b-2 border-[#c4c4c4] bg-white"><Up /></div>
              <div className="h-[229px] border-b-2 border-[#c4c4c4] bg-gradient-to-r from-[#f1f1f1] to-white" />
              <div className="mt-auto flex h-[28px] items-center justify-center border-t border-[#c4c4c4] bg-white"><Down /></div>
            </div>
          </div>
          <div className="mt-[13px] flex gap-[13px] text-[#2a2a2a]">
            <div className={"flex h-[48px] w-[505px] items-center justify-center " + qt}>Select All</div>
            <div className={"flex h-[48px] flex-1 items-center justify-center " + qt}>Deselect All</div>
          </div>
        </div>
        <div className="flex h-[53px] shrink-0 items-center pl-[5px] pt-[9px] font-bold tracking-[0.200px]"><Tri />Geometry</div>
        <div className="ml-[2px] flex h-[200px] shrink-0 flex-col rounded-[3px] border-2 border-[#dadada] bg-[#ebebeb] pl-[20px] pr-[22px] pt-[19px]">
          <div className="flex h-[48px] shrink-0 items-center justify-between"><span>Geometry type</span><Combo text="Automatic" className="w-[503px] pl-[8px]" tcls="text-[26px] tracking-[0.150px]" /></div>
          <div className="flex h-[68px] shrink-0 items-center gap-[11px] text-[#bababa]"><Check dim />Force multi-type</div>
          <div className="mt-[8px]"><Check dim /></div>
        </div>
      </div>
      <div className="flex w-[28px] shrink-0 flex-col border-l border-[#c4c4c4] bg-[#e7e7e7]">
        <div className="flex h-[28px] items-center justify-center border-b-2 border-[#c4c4c4] bg-white"><Up /></div>
        <div className="h-[455px] border-b-2 border-[#c4c4c4] bg-gradient-to-r from-[#f1f1f1] to-white" />
        <div className="mt-auto flex h-[29px] items-center justify-center border-t border-[#c4c4c4] bg-white"><Down /></div>
      </div>
    </div>
    <div className="flex items-center pl-[96px] pt-[12px] text-[#2a2a2a]">
      <div className={"flex h-[48px] w-[160px] items-center justify-center " + qt}>Help</div>
      <div className="ml-[246px] flex w-[326px] items-center gap-[10px]"><Check />Add saved file to map</div>
      <div className={"flex h-[48px] w-[160px] items-center justify-center " + qt}>Cancel</div>
      <div className="ml-[12px] flex h-[48px] w-[160px] items-center justify-center rounded-[5px] border-[3px] border-[#6aaef0] bg-gradient-to-b from-[#fdfefe] to-[#e3e8ee]">OK</div>
    </div>
  </div>
);

/* ---------- "Save Layer As" dialog ---------- */

const mac = "border border-[#e6e6e6] bg-white shadow-[0_2px_2px_rgba(0,0,0,0.16)]";

const SideHead = ({ children, className = "h-[64px] pt-[30px]" }: { children: Node; className?: string }) => (
  <div className={"flex shrink-0 items-center pl-[32px] text-[22px] font-semibold tracking-[-0.100px] text-[#a9a997] " + className}>{children}</div>
);

const SideItem = ({ icon, children, on }: { icon: Node; children: Node; on?: boolean }) => (
  <div className={"mx-[20px] flex h-[56px] shrink-0 items-center rounded-[10px] " + (on ? "bg-[#d4d3bc]" : "")}>
    <div className="ml-[14px] flex w-[36px] shrink-0 justify-center">{icon}</div>
    <span className="-mt-px ml-[10px] whitespace-nowrap">{children}</span>
  </div>
);

const tags: [string, string][] = [["Red", "bg-[#ff4015]"], ["Orange", "bg-[#f18b00]"], ["Yellow", "bg-[#efc100]"], ["Green", "bg-[#00b500]"], ["Blue", "bg-[#007df7]"], ["Purple", "bg-[#a855c9]"], ["Gray", "bg-[#7c7c74]"]];

const Folder = ({ dim }: { dim?: boolean }) => (
  <svg viewBox="0 0 30 27" className={dim ? "h-[27px] w-[30px] shrink-0 opacity-50" : "h-[27px] w-[30px] shrink-0"}>
    <path d="M1 3q0-2 2-2h7l3 3h14q2 0 2 2v5H1z" fill="#1a86cf" />
    <path d="M1 8h28v15q0 3-2 3H3q-2 0-2-3z" fill="#6fccfb" />
    <path d="M1 22v2q0 2 2 2h24q2 0 2-2v-2q0 2-2 2H3q-2 0-2-2z" fill="#3da5dc" />
  </svg>
);

const Chev = ({ color = "#8f8f8f" }: { color?: string }) => (
  <svg viewBox="0 0 8 14" className="h-[14px] w-[8px] shrink-0" fill="none" stroke={color} strokeWidth="2"><path d="M1 1l6 6-6 6" /></svg>
);

const ChevDown = () => (
  <svg viewBox="0 0 16 12" className="h-[11px] w-[15px] shrink-0" fill="none" stroke="#222" strokeWidth="3"><path d="M2 2l6 7 6-7" /></svg>
);

const FileRow = ({ name, on }: { name: string; on?: boolean }) => (
  <div className={"mx-[21px] flex h-[44px] shrink-0 items-center rounded-[9px] " + (on ? "bg-[#dcdcdc]" : "")}>
    <div className="ml-[12px]"><Folder /></div>
    <span className="ml-[11px] flex-1 whitespace-nowrap text-[#242424]">{name}</span>
    <div className="mr-[13px] h-[20px] w-[20px] rounded-full border border-[#4cc45c] bg-[#5ed76b]" />
    <div className="mr-[13px] flex"><Chev /></div>
  </div>
);

const ListHead = ({ children, className = "h-[66px] pt-[15px]" }: { children: Node; className?: string }) => (
  <div className={"flex shrink-0 items-center pl-[74px] text-[22px] font-semibold tracking-[0.150px] text-[#8a8a8a] " + className}>{children}</div>
);

const DimRow = ({ icon, name, arrow }: { icon: Node; name: string; arrow?: boolean }) => (
  <div className="mx-[21px] flex h-[44px] shrink-0 items-center text-[#c2c2c2]">
    <div className="ml-[10px] flex w-[34px] shrink-0 justify-center">{icon}</div>
    <span className="ml-[9px] flex-1 whitespace-nowrap pt-px tracking-normal">{name}</span>
    {arrow && <div className="mr-[13px]"><Chev color="#9a9a9a" /></div>}
  </div>
);

const GDoc = () => (
  <svg viewBox="0 0 32 32" className="h-[32px] w-[32px]"><rect width="32" height="32" rx="1" fill="#a5c0f8" /><path d="M6 9h20M6 13h20M6 17h20M6 21h13" stroke="#fff" strokeWidth="2" /></svg>
);

const SaveDialog = () => (
  <div className="absolute left-[1530px] top-[646px] flex h-[900px] w-[1682px] overflow-hidden rounded-[20px] bg-white shadow-[0_36px_60px_rgba(0,0,0,0.38),0_0_2px_rgba(0,0,0,0.5)]">
    <div className="flex w-[258px] shrink-0 flex-col overflow-hidden border-r-2 border-[#dedec8] bg-gradient-to-br from-[#e4e4e4] via-[#e9e9d7] via-25% to-[#ebebd6] text-[26px] tracking-[-0.450px] text-[#4b4b43]">
      <div className="flex h-[58px] shrink-0 items-center border-b-2 border-[#cfcfc0] pb-px pl-[16px]"><Lights tone="bg-[#cbcbca]" third="bg-[#28c840]" /></div>
      <div className="-mt-[2px] ml-[38px] h-[2px] w-[27px] shrink-0 bg-[#2b63d9]" />
      <SideHead className="h-[79px] pt-[45px]">iCloud</SideHead>
      <SideItem icon={<svg viewBox="0 0 32 22" className="h-[22px] w-[32px]" fill="none" stroke="#3aaad8" strokeWidth="2.200"><path d="M8 20.500a6 6 0 0 1-1.500-11.600Q8 6 11 6.500 13 1.500 18 1.500q7 .500 7.500 8 5 1 5 5.500t-5 5.500z" /></svg>}>iCloud Dri...</SideItem>
      <SideHead>Locations</SideHead>
      <SideItem icon={<svg viewBox="0 0 36 22" className="h-[22px] w-[36px]" fill="none" stroke="#77776c" strokeWidth="2.200"><rect x="5" y="1.500" width="26" height="17" rx="2" /><path d="M0 20h36" strokeWidth="2.800" /></svg>}>gcdi23</SideItem>
      <SideItem icon={<svg viewBox="0 0 26 26" className="h-[26px] w-[26px]" fill="none" stroke="#77776c" strokeWidth="1.800"><circle cx="13" cy="13" r="11.500" /><path d="M13 1.500v23M1.500 13h23M13 1.500q-12 11 0 23M13 1.500q12 11 0 23M4 6q9 5 18 0M4 20q9-5 18 0" /></svg>}>Network</SideItem>
      <SideHead>Tags</SideHead>
      {tags.map(([n, c]) => (
        <SideItem key={n} on={n === "Green"} icon={<div className={"h-[20px] w-[20px] rounded-full " + c} />}>{n}</SideItem>
      ))}
      <SideItem icon={<svg viewBox="0 0 26 20" className="h-[20px] w-[26px]" fill="none" stroke="#77776c" strokeWidth="1.900"><circle cx="10" cy="10" r="9" /><path d="M13 1.500q3-.500 5 0a9 9 0 0 1 0 17q-3 .500-5 0" /></svg>}>All Tags...</SideItem>
    </div>
    <div className="flex flex-1 flex-col">
      <div className="flex h-[58px] shrink-0 items-center border-b-2 border-[#dcdcdc] bg-[#fbfbfb] pl-[622px] text-[26px] font-bold text-[#4b4b4b]"><span className="-mt-[3px]">Save Layer As</span></div>
      <div className="mt-[19px] flex h-[42px] shrink-0 items-center">
        <span className="w-[460px] pt-[2px] text-right text-[22px] tracking-[-0.200px] text-[#808080]">Save As:</span>
        <div className={"ml-[18px] flex h-[42px] w-[467px] items-center rounded-[10px] pl-[22px] text-[26px] tracking-[-0.450px] text-[#242424] " + mac}>NYCntaPerBlack</div>
      </div>
      <div className="mt-[22px] flex h-[42px] shrink-0 items-center">
        <span className="w-[460px] pt-[3px] text-right text-[22px] tracking-[-0.200px] text-[#808080]">Tags:</span>
        <div className={"ml-[18px] h-[42px] w-[467px] rounded-[10px] " + mac} />
      </div>
      <div className="mt-[43px] flex h-[41px] shrink-0 items-center pl-[40px]">
        <div className={"flex h-[41px] w-[47px] items-center justify-center rounded-[9px] pr-[6px] " + mac}><svg viewBox="0 0 13 22" className="h-[22px] w-[13px]" fill="none" stroke="#555" strokeWidth="2.200"><path d="M12 1L1.500 11 12 21" /></svg></div>
        <div className={"ml-px flex h-[41px] w-[47px] items-center justify-center rounded-[9px] " + mac}><svg viewBox="0 0 13 22" className="h-[22px] w-[13px]" fill="none" stroke="#b5b5b5" strokeWidth="2.200"><path d="M1 1l10.500 10L1 21" /></svg></div>
        <div className={"ml-[14px] flex h-[41px] w-[102px] items-center justify-between rounded-[9px] pl-[18px] pr-[12px] " + mac}>
          <svg viewBox="0 0 31 24" className="h-[24px] w-[31px]" fill="none" stroke="#222" strokeWidth="2.400"><rect x="1.500" y="1.500" width="28" height="21" rx="3" /><path d="M11 2v20M20 2v20" /></svg><ChevDown />
        </div>
        <div className={"ml-[14px] flex h-[41px] w-[99px] items-center justify-between rounded-[9px] pl-[18px] pr-[12px] " + mac}>
          <svg viewBox="0 0 28 27" className="h-[27px] w-[28px]" fill="none" stroke="#222" strokeWidth="2">
            <path d="M0 1.200h28M0 14.500h28" /><rect x="1" y="5" width="5.500" height="5.500" rx="1" /><rect x="11" y="5" width="5.500" height="5.500" rx="1" /><rect x="21" y="5" width="5.500" height="5.500" rx="1" />
            <rect x="1" y="19" width="5.500" height="6" rx="1" /><rect x="11" y="19" width="5.500" height="6" rx="1" /><rect x="21" y="19" width="5.500" height="6" rx="1" />
          </svg><ChevDown />
        </div>
        <div className={"ml-[112px] flex h-[41px] w-[415px] items-center rounded-[10px] pl-[17px] pr-[3px] text-[26px] tracking-[-0.450px] text-[#242424] " + mac}>
          <Folder /><span className="-mt-[2px] ml-[9px] flex-1">NYCntaPerBlack</span>
          <div className="flex h-[33px] w-[33px] items-center justify-center rounded-[8px] bg-gradient-to-b from-[#2b92fb] to-[#0773f5]">
            <svg viewBox="0 0 16 22" className="h-[22px] w-[16px]" fill="none" stroke="#fff" strokeWidth="2.800" strokeLinecap="round"><path d="M2.500 7.500L8 2l5.500 5.500M2.500 14.500L8 20l5.500-5.500" /></svg>
          </div>
        </div>
        <div className={"ml-[15px] flex h-[41px] w-[42px] items-center justify-center rounded-[9px] " + mac}><svg viewBox="0 0 16 12" className="h-[11px] w-[15px]" fill="none" stroke="#222" strokeWidth="3"><path d="M2 9l6-6 6 6" /></svg></div>
        <div className={"ml-[113px] flex h-[41px] w-[322px] items-center rounded-[10px] pl-[14px] text-[24px] tracking-[0.300px] text-[#c3c3c3] " + mac}>
          <svg viewBox="0 0 26 24" className="mr-[14px] h-[24px] w-[26px]" fill="none" stroke="#2a2a2a" strokeWidth="2.200"><circle cx="11" cy="10" r="8.500" /><path d="M17.500 16.500L24 22.500" strokeWidth="2.800" /></svg>Search
        </div>
      </div>
      <div className="mt-[42px] flex h-[471px] shrink-0 border-y-2 border-[#e6e6e6] text-[24px] tracking-[-0.150px]">
        <div className="flex w-[410px] shrink-0 flex-col border-r-2 border-[#e2e2e2]">
          <ListHead className="mb-[11px] h-[56px] border-b-2 border-[#e2e2e2]">Today</ListHead>
          <FileRow name="DRI" on /><FileRow name="GC Digital Fellow" /><FileRow name="How to...ctive Map" />
          <ListHead>Previous 7 Days</ListHead>
          <FileRow name="Chapters" /><FileRow name="DISSERTATION" />
          <ListHead>Previous 30 Days</ListHead>
          <FileRow name="Research General" />
        </div>
        <div className="flex w-[410px] shrink-0 flex-col border-r-2 border-[#e2e2e2]">
          <ListHead className="mb-[11px] h-[56px] border-b-2 border-[#e2e2e2]">Today</ListHead>
          <div className="mx-[21px] flex h-[44px] shrink-0 items-center rounded-[9px] bg-[#0062e1] text-[#6aa0ef]">
            <svg viewBox="0 0 30 27" className="ml-[12px] h-[27px] w-[30px]"><path d="M1 3q0-2 2-2h7l3 3h14q2 0 2 2v5H1z" fill="#8cc4ee" /><path d="M1 8h28v15q0 3-2 3H3q-2 0-2-3z" fill="#b7e4fc" /></svg>
            <span className="ml-[11px] flex-1">NYCntaPerBlack</span><div className="mr-[13px]"><Chev color="#fff" /></div>
          </div>
          <ListHead className="h-[55px] pt-[6px]">Previous 30 Days</ListHead>
          <DimRow name="Day 1 Presentation.pptx" icon={<svg viewBox="0 0 30 28" className="h-[28px] w-[30px]"><rect x=".500" y=".500" width="29" height="26" rx="3" fill="#f4f4f4" stroke="#dcdcdc" /><path d="M4 6h22v12H4z" fill="#c4c7ca" /><path d="M5 17l6-7 5 4 4-5 5 8z" fill="#999" /></svg>} />
          <DimRow name="Front end/...rkshop.gdoc" icon={<GDoc />} />
          <DimRow name="images" arrow icon={<Folder dim />} />
          <ListHead>Earlier</ListHead>
          <DimRow name="demo.qgz" icon={<svg viewBox="0 0 26 30" className="h-[29px] w-[25px]"><path d="M1 1h16l8 8v20H1z" fill="#fafafa" stroke="#e9e9e9" strokeWidth="1.500" /><path d="M17 1v8h8" fill="#eee" stroke="#e2e2e2" /></svg>} />
          <DimRow name="Lesson Plan.gdoc" icon={<GDoc />} />
        </div>
        <div className="w-[410px] shrink-0 border-r-2 border-[#e2e2e2]" />
      </div>
      <div className="flex items-center pl-[40px] pr-[40px] pt-[39px] text-[26px] tracking-[-0.400px] text-[#242424]">
        <div className={"flex h-[41px] w-[177px] items-center justify-center rounded-[9px] pb-[2px] " + mac}>New Folder</div>
        <div className={"ml-auto flex h-[41px] w-[145px] items-center justify-center rounded-[9px] pb-[2px] " + mac}>Cancel</div>
        <div className="ml-[15px] flex h-[40px] w-[144px] items-center justify-center rounded-[9px] bg-gradient-to-b from-[#2b92fd] to-[#0a7afe] pb-[2px] font-medium text-white shadow-sm">Save</div>
      </div>
    </div>
  </div>
);

/* ---------- callouts ---------- */

const arrows = [
  { c: [1030, 418], e: [868, 537], h: "852,518 839,553 877,555" },
  { c: [1692, 460], e: [1527, 577], h: "1514,559 1503,597 1540,597" },
  { c: [2795, 577], e: [2688, 756], h: "2666,744 2670,784 2706,768" },
  { c: [1088, 1867], e: [910, 1767], h: "920,1747 883,1752 898,1787" },
  { c: [1670, 1928], e: [1526, 1784], h: "1505,1762 1542,1767 1510,1799" },
];

const Callouts = () => (
  <>
    <svg viewBox="0 0 3228 2216" className="absolute inset-0 h-full w-full" fill="#df5948" stroke="#df5948" strokeLinejoin="round">
      {arrows.map((a, i) => (
        <g key={i}>
          <path d={`M${a.c[0]} ${a.c[1]}L${a.e[0]} ${a.e[1]}`} strokeWidth="11" />
          <circle cx={a.c[0]} cy={a.c[1]} r="17" stroke="none" />
          <polygon points={a.h} strokeWidth="6" />
        </g>
      ))}
    </svg>
    <div className="absolute left-[799px] top-[308px] flex whitespace-nowrap leading-[84px] tracking-[-0.100px]"><span className="w-[46px] tracking-[-2px]">1.</span>Name the file</div>
    <div className="absolute left-[1484px] top-[266px] whitespace-nowrap leading-[84px]"><span className="tracking-[-1.500px]">2. </span>Browse to the folder you</div>
    <div className="absolute left-[1521px] top-[350px] whitespace-nowrap leading-[84px] tracking-[-0.100px]">want to save the file into</div>
    <div className="absolute left-[2196px] top-[445px] whitespace-nowrap leading-[84px] tracking-[-0.200px]"><span className="tracking-[-1.500px]">3. </span>Select the folder and click Save</div>
    <div className="absolute left-[694px] top-[1915px] whitespace-nowrap leading-[84px] tracking-[-0.600px]"><span className="tracking-[-1.500px]">4. </span>Deselect this check box</div>
    <div className="absolute left-[1700px] top-[1951px] whitespace-nowrap leading-[84px]"><span className="tracking-[-1px]">5. </span>Click OK</div>
  </>
);

export default function App() {
  return (
    <div className="relative h-[2216px] w-[3228px] overflow-hidden bg-[#d6d6d6] font-['Inter',sans-serif] leading-normal">
      <div className="absolute left-[44px] top-[25px] flex h-[2148px] w-[2454px] flex-col overflow-hidden rounded-[20px] bg-[#eeeeee] shadow-[0_36px_60px_rgba(0,0,0,0.36),0_0_3px_rgba(0,0,0,0.5)]">
        <div className="flex h-[58px] shrink-0 items-center border-b-2 border-[#d6d6d6] bg-[#fafafa] pl-[16px]">
          <Lights />
          <span className="-mt-[2px] ml-[952px] text-[26px] font-bold tracking-[0.200px] text-[#505050]">*Untitled Project - QGIS</span>
        </div>
        <Toolbar items={row1} className="h-[75px] pt-px" />
        <Toolbar items={row2} className="h-[79px] pt-[2px]" />
        <div className="flex min-h-0 flex-1 pt-px">
          <LayersPanel />
          <div className="ml-[14px] mr-[2px] min-w-0 flex-1 border-l border-t border-[#b9b9b9] bg-white"><MapCanvas /></div>
        </div>
        <StatusBar />
        {/* soft shadow of the export dialog, clipped by the main window */}
        <div className="absolute left-[296px] top-[421px] h-[1320px] w-[1182px] rounded-[22px] shadow-[0_22px_50px_rgba(0,0,0,0.27),0_0_2px_rgba(0,0,0,0.5)]" />
      </div>
      <VectorDialog />
      <SaveDialog />
      <div className="text-[60px] tracking-[-0.450px] text-black"><Callouts /></div>
    </div>
  );
}
